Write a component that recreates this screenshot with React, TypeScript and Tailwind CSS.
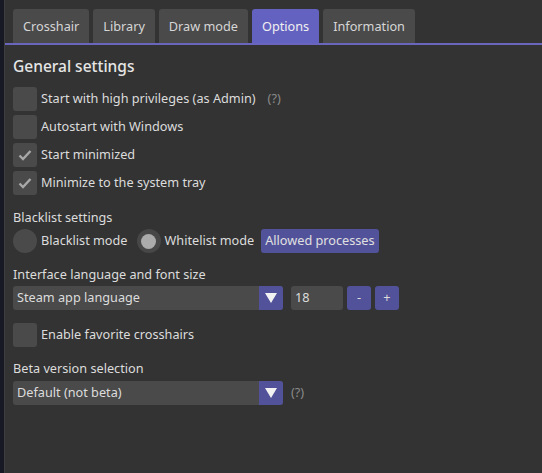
import React from 'react'

const font = { fontFamily: '"Noto Sans", "Open Sans", sans-serif' }

const tabs = ['Crosshair', 'Library', 'Draw mode', 'Options', 'Information']

const Check = ({ checked }: { checked?: boolean }) => (
  <div className="w-6 h-6 rounded-[3px] bg-[#4a4a4a] flex items-center justify-center shrink-0">
    {checked ? (
      <svg width="16" height="16" viewBox="0 0 16 16">
        <path d="M2.5 8.5 L6 12 L13.5 4" fill="none" stroke="#a8a8a8" strokeWidth="2.4" />
      </svg>
    ) : null}
  </div>
)

const CheckRow = ({ label, checked, hint }: { label: string; checked?: boolean; hint?: boolean }) => (
  <div className="flex items-center gap-1 h-6">
    <Check checked={checked} />
    <span className="text-[12.7px] text-[#dcdcdc]">{label}</span>
    {hint ? <span className="text-[12.7px] text-[#8a8a8a] ml-2">(?)</span> : null}
  </div>
)

const Arrow = () => (
  <div className="w-6 h-6 bg-[#52529a] flex items-center justify-center rounded-r-[3px]">
    <svg width="14" height="12" viewBox="0 0 14 12">
      <path d="M1 1 H13 L7 11 Z" fill="#f2f2f2" />
    </svg>
  </div>
)

const Combo = ({ value }: { value: string }) => (
  <div className="w-[270px] h-6 bg-[#4a4a4a] rounded-[3px] flex items-center">
    <span className="flex-1 pl-1 text-[12.7px] text-[#dcdcdc]">{value}</span>
    <Arrow />
  </div>
)

const Small = ({ children }: { children: React.ReactNode }) => (
  <div className="w-6 h-6 bg-[#52529a] rounded-[3px] flex items-center justify-center text-[12.7px] text-[#dcdcdc]">
    {children}
  </div>
)

export default function App() {
  return (
    <div className="w-[542px] h-[473px] flex bg-[#333333]" style={font}>
      <div className="w-[5px] bg-[#171a25] shrink-0 border-r border-[#3d3d3d]" />
      <div className="flex-1 flex flex-col">
        <div className="flex gap-1 pl-2 pt-[9px] border-b-2 border-[#6a66c0]">
          {tabs.map(t => (
            <div
              key={t}
              className={
                'h-[34px] px-[10px] pt-[2px] flex items-center rounded-t-[3px] text-[12.7px] ' +
                (t === 'Options' ? 'bg-[#6462c0] text-[#f0f0f0]' : 'bg-[#4a4a4a] text-[#d6d6d6]')
              }
            >
              {t}
            </div>
          ))}
        </div>
        <div className="pl-2 pt-[9px] flex flex-col">
          <div className="text-[15.5px] text-[#e6e6e6] font-medium leading-6">General settings</div>
          <div className="flex flex-col gap-1 mt-[9px]">
            <CheckRow label="Start with high privileges (as Admin)" hint />
            <CheckRow label="Autostart with Windows" />
            <CheckRow label="Start minimized" checked />
            <CheckRow label="Minimize to the system tray" checked />
          </div>
          <div className="text-[12.7px] text-[#dcdcdc] mt-[14px] leading-4">Blacklist settings</div>
          <div className="flex items-center mt-[4px] h-6">
            <div className="w-6 h-6 rounded-full bg-[#4a4a4a]" />
            <span className="text-[12.7px] text-[#dcdcdc] ml-1">Blacklist mode</span>
            <div className="w-6 h-6 rounded-full bg-[#474747] flex items-center justify-center ml-[9px]">
              <div className="w-[15px] h-[15px] rounded-full bg-[#ababab]" />
            </div>
            <span className="text-[12.7px] text-[#dcdcdc] ml-1">Whitelist mode</span>
            <div className="ml-[7px] h-6 px-1 bg-[#52529a] rounded-[3px] flex items-center text-[12.7px] text-[#e0e0e0]">
              Allowed processes
            </div>
          </div>
          <div className="text-[12.7px] text-[#dcdcdc] mt-[13px] leading-4">Interface language and font size</div>
          <div className="flex items-center gap-1 mt-[4px]">
            <Combo value="Steam app language" />
            <div className="ml-1 w-[52px] h-6 bg-[#4a4a4a] rounded-[3px] flex items-center pl-1 text-[12.7px] text-[#dcdcdc]">
              18
            </div>
            <Small>-</Small>
            <Small>+</Small>
          </div>
          <div className="mt-[13px]">
            <CheckRow label="Enable favorite crosshairs" />
          </div>
          <div className="text-[12.7px] text-[#dcdcdc] mt-[13px] leading-4">Beta version selection</div>
          <div className="flex items-center mt-[5px] gap-2">
            <Combo value="Default (not beta)" />
            <span className="text-[12.7px] text-[#8a8a8a]">(?)</span>
          </div>
        </div>
      </div>
    </div>
  )
}
